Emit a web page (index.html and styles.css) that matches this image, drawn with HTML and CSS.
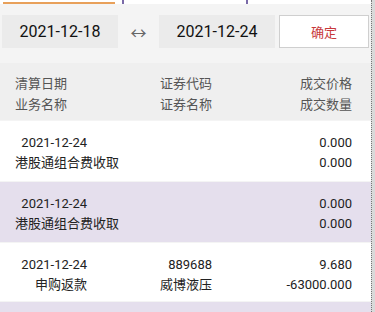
FILE: index.html
```html
<!DOCTYPE html>
<html lang="zh-CN">
<head>
    <meta charset="UTF-8">
    <meta name="viewport" content="width=device-width, initial-scale=1.0">
    <title>交割单查询</title>
    <link rel="stylesheet" href="styles.css">
</head>
<body>

<div class="screen">
    <div class="page">
        <!-- tab strip (cut off at top) -->
        <div class="tabs">
            <div class="tab active"></div>
            <div class="tab"></div>
            <div class="tab"></div>
        </div>

        <!-- date range -->
        <div class="range">
            <div class="date-box">2021-12-18</div>
            <div class="range-arrow">↔</div>
            <div class="date-box">2021-12-24</div>
            <button class="confirm">确定</button>
        </div>

        <!-- list header -->
        <div class="list-head">
            <div class="col col-1">
                <div>清算日期</div>
                <div>业务名称</div>
            </div>
            <div class="col col-2">
                <div>证券代码</div>
                <div>证券名称</div>
            </div>
            <div class="col col-3">
                <div>成交价格</div>
                <div>成交数量</div>
            </div>
        </div>

        <!-- records -->
        <div class="record">
            <div class="col col-1">
                <div>2021-12-24</div>
                <div>港股通组合费收取</div>
            </div>
            <div class="col col-2">
                <div></div>
                <div></div>
            </div>
            <div class="col col-3">
                <div>0.000</div>
                <div>0.000</div>
            </div>
        </div>
        <div class="record alt">
            <div class="col col-1">
                <div>2021-12-24</div>
                <div>港股通组合费收取</div>
            </div>
            <div class="col col-2">
                <div></div>
                <div></div>
            </div>
            <div class="col col-3">
                <div>0.000</div>
                <div>0.000</div>
            </div>
        </div>
        <div class="record short">
            <div class="col col-1">
                <div>2021-12-24</div>
                <div>申购返款</div>
            </div>
            <div class="col col-2">
                <div>889688</div>
                <div>威博液压</div>
            </div>
            <div class="col col-3">
                <div>9.680</div>
                <div>-63000.000</div>
            </div>
        </div>
        <div class="record alt"></div>
    </div>
    <div class="scrollbar"></div>
</div>

</body>
</html>
```

FILE: styles.css
```css
body {
    margin: 0;
    font-family: Roboto, "Noto Sans CJK SC", sans-serif;
    color: #222;
    background-color: #fff;
}
.screen {
    display: flex;
    width: 375px;
    height: 312px;
    overflow: hidden;
}
.page {
    flex: 1;
    background-color: #f4f4f4;
}
.scrollbar {
    width: 3px;
    background-color: #d9d9d9;
    border-left: 1px dotted #777;
}

/* tabs */
.tabs {
    display: flex;
    height: 4px;
    background-color: #fff;
}
.tab {
    width: 122px;
    border-right: 2px solid #7a6aa8;
}
.tab:last-child {
    border-right: none;
}
.tab.active {
    position: relative;
}
.tab.active::after {
    content: "";
    position: absolute;
    left: 3px;
    right: 7px;
    bottom: 0;
    height: 2px;
    background-color: #e8a05a;
}

/* date range */
.range {
    display: flex;
    align-items: center;
    padding: 11px 0 0 2px;
    height: 33px;
}
.date-box {
    width: 116px;
    height: 33px;
    line-height: 33px;
    text-align: center;
    background-color: #ebebeb;
    font-size: 16px;
    color: #111;
}
.range-arrow {
    width: 41px;
    text-align: center;
    font-size: 16px;
    color: #666;
}
.confirm {
    margin-left: 4px;
    width: 90px;
    height: 33px;
    background-color: #fff;
    border: 1px solid #cfcfcf;
    color: #c8383a;
    font-family: inherit;
    font-size: 13px;
    padding: 0;
}

/* list */
.list-head {
    display: flex;
    margin-top: 15px;
    height: 57px;
    padding: 10px 19px 0 15px;
    box-sizing: border-box;
    background-color: #efefef;
    color: #555;
    font-size: 13px;
    line-height: 21px;
}
.list-head .col-1 {
    text-align: left;
}
.record {
    display: flex;
    height: 60px;
    margin-top: 1px;
    padding: 12px 19px 0 15px;
    box-sizing: border-box;
    background-color: #fff;
    font-size: 13px;
    line-height: 20px;
}
.record.short {
    height: 58px;
}
.record.alt {
    background-color: #e5dfed;
}
.col {
    white-space: nowrap;
}
.col-1 {
    width: 72px;
    text-align: right;
}
.col-2 {
    width: 125px;
    text-align: right;
}
.col-3 {
    flex: 1;
    text-align: right;
}
```
